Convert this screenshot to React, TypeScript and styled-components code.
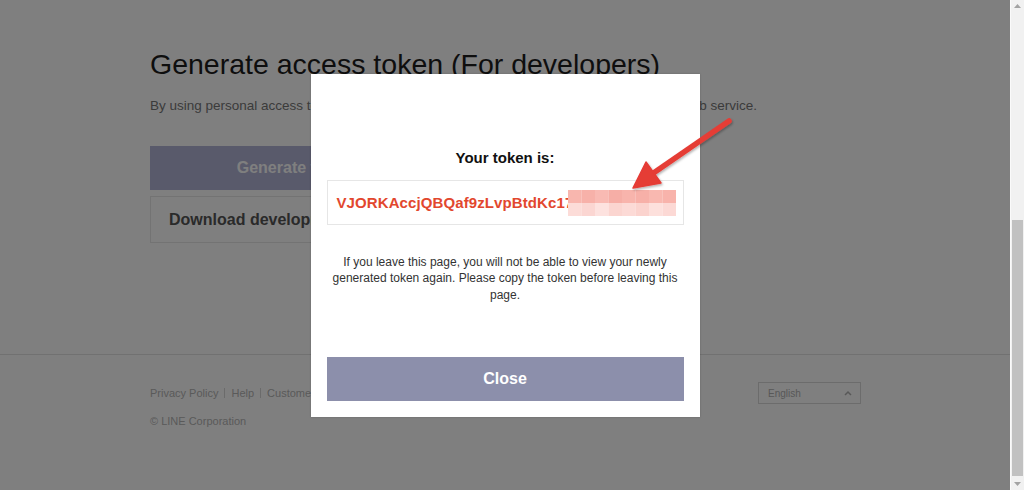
import React from "react";
import styled, { createGlobalStyle } from "styled-components";

const Global = createGlobalStyle`
  html, body { margin: 0; padding: 0; overflow: hidden; }
  body { font-family: "Liberation Sans", Arial, sans-serif; background: #fff; }
  * { box-sizing: border-box; }
`;

const Shell = styled.div`
  display: flex;
  width: 1024px;
  height: 490px;
  overflow: hidden;
`;

const Page = styled.div`
  position: relative;
  flex: 1;
  height: 100%;
  background: #fff;
  overflow: hidden;
`;

const Content = styled.main`
  width: 712px;
  margin: 0 auto;
  padding: 48px 0 0 1px;
  display: flex;
  flex-direction: column;
`;

const Heading = styled.h1`
  margin: 0;
  font-size: 28.5px;
  line-height: 32px;
  font-weight: 400;
  color: #1c1c1c;
`;

const Lead = styled.p`
  margin: 18px 0 0;
  font-size: 13.5px;
  line-height: 16px;
  color: #777;
`;

const Actions = styled.div`
  margin-top: 32px;
  display: flex;
  flex-direction: column;
  gap: 6px;
`;

const PrimaryBtn = styled.div`
  width: 290px;
  height: 44px;
  display: flex;
  align-items: center;
  justify-content: center;
  background: #b2b4d6;
  color: #fff;
  font-size: 16px;
  font-weight: 700;
`;

const OutlineBtn = styled.div`
  width: 290px;
  height: 47px;
  display: flex;
  align-items: center;
  padding-left: 18px;
  border: 1px solid #e6e6e6;
  color: #555;
  font-size: 16px;
  font-weight: 700;
  white-space: nowrap;
`;

const Footer = styled.footer`
  margin-top: 111px;
  border-top: 1px solid #e2e2e2;
`;

const FooterInner = styled.div`
  width: 712px;
  margin: 0 auto;
  padding: 27px 0 0 1px;
  display: flex;
  flex-direction: column;
`;

const FooterRow = styled.div`
  display: flex;
  align-items: center;
  justify-content: space-between;
`;

const Links = styled.nav`
  display: flex;
  align-items: center;
`;

const FooterLink = styled.span`
  font-size: 11px;
  line-height: 14px;
  color: #b4b4b4;
  & + &::before {
    content: "";
    display: inline-block;
    width: 1px;
    height: 10px;
    margin: 0 6px;
    vertical-align: -1px;
    background: #d6d6d6;
  }
`;

const LangSelect = styled.div`
  width: 103px;
  height: 22px;
  border: 1px solid #d8d8d8;
  display: flex;
  align-items: center;
  justify-content: space-between;
  padding: 0 8px 0 9px;
  font-size: 10px;
  color: #b0b0b0;
`;

const Copyright = styled.div`
  margin-top: 10px;
  font-size: 11px;
  line-height: 14px;
  color: #b4b4b4;
`;

const Overlay = styled.div`
  position: absolute;
  inset: 0;
  background: rgba(0, 0, 0, 0.5);
  display: flex;
  align-items: center;
  justify-content: center;
`;

const Modal = styled.div`
  width: 389px;
  height: 343px;
  background: #fff;
  padding: 74px 16px 16px;
  display: flex;
  flex-direction: column;
  box-shadow: 0 0 2px rgba(0, 0, 0, 0.2);
`;

const ModalTitle = styled.h2`
  margin: 0;
  font-size: 15px;
  line-height: 20px;
  font-weight: 700;
  color: #111;
  text-align: center;
`;

const TokenBox = styled.div`
  margin-top: 12px;
  height: 45px;
  border: 1px solid #e6e6e6;
  display: flex;
  align-items: center;
  padding-left: 9px;
  position: relative;
`;

const TokenText = styled.span`
  font-size: 15px;
  font-weight: 700;
  color: #e2472e;
  letter-spacing: 0.1px;
`;

const Redaction = styled.svg`
  position: absolute;
  left: 240px;
  top: 9px;
`;

const Notice = styled.p`
  margin: 29px 0 0;
  font-size: 12px;
  line-height: 16.5px;
  color: #333;
  text-align: center;
`;

const CloseBtn = styled.div`
  margin-top: auto;
  height: 44px;
  display: flex;
  align-items: center;
  justify-content: center;
  background: #8c8fab;
  color: #fff;
  font-size: 16px;
  font-weight: 700;
`;

const Arrow = styled.svg`
  position: absolute;
  left: 0;
  top: 0;
  pointer-events: none;
`;

const Scrollbar = styled.div`
  width: 14px;
  height: 100%;
  background: #f1f1f1;
  border-left: 1px solid #fafafa;
  display: flex;
  flex-direction: column;
  align-items: center;
`;

const ScrollArrow = styled.div`
  height: 12px;
  width: 100%;
  display: flex;
  align-items: center;
  justify-content: center;
`;

const Track = styled.div`
  flex: 1;
  width: 100%;
  display: flex;
  flex-direction: column;
  justify-content: flex-end;
  padding: 0 1px 2px 1px;
`;

const Thumb = styled.div`
  height: 256px;
  background: #c1c1c1;
`;

const cells = [
  ["#f8b6ae", "#f7b1a9", "#f9bab3", "#f6aea6", "#f8b4ac", "#f7b0a8", "#f9b8b0", "#f8b3ab"],
  ["#fcdcd8", "#fbd6d2", "#fde2df", "#fbd5d0", "#fcdad6", "#fbd3ce", "#fde0dc", "#fcd9d5"],
];

export default function App() {
  return (
    <>
      <Global />
      <Shell>
        <Page>
          <Content>
            <Heading>Generate access token (For developers)</Heading>
            <Lead>
              By using personal access tokens, you can configure notifications without having to add a web service.
            </Lead>
            <Actions>
              <PrimaryBtn>Generate token</PrimaryBtn>
              <OutlineBtn>Download development guide</OutlineBtn>
            </Actions>
          </Content>
          <Footer>
            <FooterInner>
              <FooterRow>
                <Links>
                  <FooterLink>Privacy Policy</FooterLink>
                  <FooterLink>Help</FooterLink>
                  <FooterLink>Customer Service</FooterLink>
                </Links>
                <LangSelect>
                  <span>English</span>
                  <svg width="8" height="6" viewBox="0 0 8 6">
                    <path d="M1 5 L4 2 L7 5" fill="none" stroke="#b0b0b0" strokeWidth="1.5" />
                  </svg>
                </LangSelect>
              </FooterRow>
              <Copyright>© LINE Corporation</Copyright>
            </FooterInner>
          </Footer>
          <Overlay>
            <Modal>
              <ModalTitle>Your token is:</ModalTitle>
              <TokenBox>
                <TokenText>VJORKAccjQBQaf9zLvpBtdKc17</TokenText>
                <Redaction width="108" height="26" viewBox="0 0 108 26">
                  {cells.map((row, r) =>
                    row.map((c, i) => (
                      <rect key={`${r}-${i}`} x={i * 13.5} y={r * 13} width="13.6" height="13.1" fill={c} />
                    ))
                  )}
                </Redaction>
              </TokenBox>
              <Notice>
                If you leave this page, you will not be able to view your newly generated token again. Please copy the token before leaving this page.
              </Notice>
              <CloseBtn>Close</CloseBtn>
            </Modal>
          </Overlay>
          <Arrow width="1010" height="490" viewBox="0 0 1010 490">
            <defs>
              <filter id="sh" x="-20%" y="-20%" width="140%" height="140%">
                <feDropShadow dx="1" dy="1.5" stdDeviation="1.2" floodColor="#000" floodOpacity="0.3" />
              </filter>
            </defs>
            <g filter="url(#sh)" fill="#e53c36" stroke="#e53c36">
              <line x1="729" y1="121" x2="652" y2="174" strokeWidth="5.5" strokeLinecap="round" />
              <polygon points="633,188 661,183 646,162" strokeWidth="1.5" strokeLinejoin="round" />
            </g>
          </Arrow>
        </Page>
        <Scrollbar>
          <ScrollArrow>
            <svg width="7" height="4" viewBox="0 0 7 4">
              <path d="M0 4 L3.5 0 L7 4 Z" fill="#a3a3a3" />
            </svg>
          </ScrollArrow>
          <Track>
            <Thumb />
          </Track>
          <ScrollArrow>
            <svg width="7" height="4" viewBox="0 0 7 4">
              <path d="M0 0 L3.5 4 L7 0 Z" fill="#a3a3a3" />
            </svg>
          </ScrollArrow>
        </Scrollbar>
      </Shell>
    </>
  );
}
